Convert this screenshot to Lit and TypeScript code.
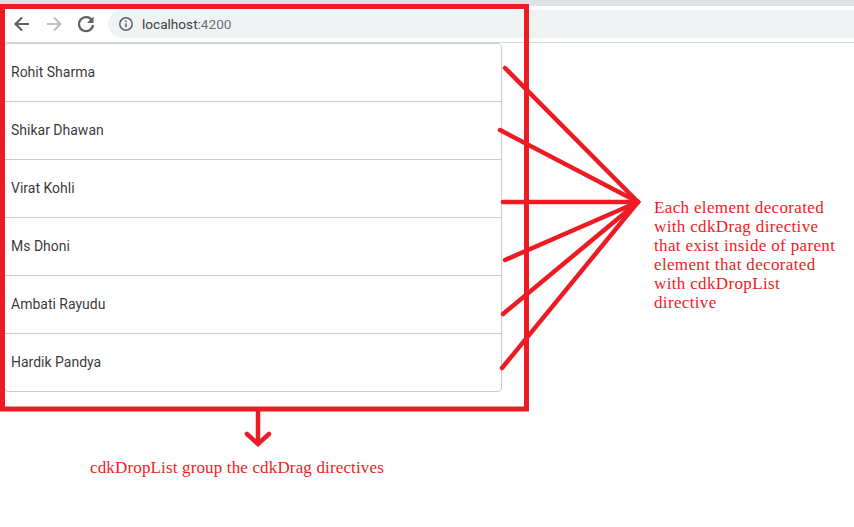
import { LitElement, html, css, svg } from "lit";
import { customElement } from "lit/decorators.js";

const NAMES = ["Rohit Sharma", "Shikar Dhawan", "Virat Kohli", "Ms Dhoni", "Ambati Rayudu", "Hardik Pandya"];
const STARTS = [[505, 68], [500, 130], [503, 202], [505, 260], [503, 314], [502, 368]];

@customElement("app-root")
export class AppRoot extends LitElement {
  static styles = css`
    :host { display: block; position: relative; width: 854px; height: 527px; overflow: hidden; background: #fff; font-family: Roboto, sans-serif; }
    .tabstrip { height: 6px; background: #dee1e6; }
    .toolbar { height: 36px; display: flex; align-items: center; padding-left: 12px; border-bottom: 1px solid #d6d6d6; background: #fff; }
    .nav { display: flex; gap: 12px; margin-right: 12px; }
    .nav svg { display: block; width: 20px; height: 20px; }
    .omni { flex: 1; height: 28px; border-radius: 14px 0 0 14px; background: #f0f3f4; display: flex; align-items: center; padding-left: 10px; gap: 8px; font-size: 13.6px; color: #3c4043; }
    .omni svg { width: 16px; height: 16px; }
    .port { color: #6b7175; }
    .list { width: 498px; margin-left: 4px; box-sizing: border-box; border: 1px solid #ccc; border-radius: 4px; }
    .row { height: 58px; box-sizing: border-box; display: flex; align-items: center; padding: 0 0 2px 6px; font-size: 14px; color: rgba(0,0,0,.8); border-bottom: 1px solid #ccc; }
    .row:last-child { border-bottom: none; height: 57px; }
    .overlay { position: absolute; inset: 0; width: 854px; height: 527px; pointer-events: none; }
    .note { position: absolute; font-family: "Liberation Serif", serif; color: #ed1c24; font-size: 17px; line-height: 19px; white-space: nowrap; }
    .note.side { left: 654px; top: 198px; letter-spacing: 0.35px; }
    .note.bottom { left: 90px; top: 458px; letter-spacing: 0.15px; }
  `;

  render() {
    return html`
      <div class="tabstrip"></div>
      <div class="toolbar">
        <div class="nav">
          <svg viewBox="0 0 20 20"><path d="M17 10H4.500M10 3.500 3.500 10l6.500 6.500" fill="none" stroke="#5f6368" stroke-width="2.200"/></svg>
          <svg viewBox="0 0 20 20"><path d="M3 10h12.500M10 3.500l6.500 6.500-6.500 6.500" fill="none" stroke="#bdc1c6" stroke-width="2.200"/></svg>
          <svg viewBox="0 0 20 20"><path d="M16 6.500A7 7 0 1 0 17 11" fill="none" stroke="#5f6368" stroke-width="2.200"/><path d="M17.500 2.500v6.500h-6.500z" fill="#5f6368"/></svg>
        </div>
        <div class="omni">
          <svg viewBox="0 0 16 16"><circle cx="8" cy="8" r="6.200" fill="none" stroke="#5f6368" stroke-width="1.500"/><path d="M8 7.200v4M8 4.600v1.500" stroke="#5f6368" stroke-width="1.500"/></svg>
          <span>localhost<span class="port">:4200</span></span>
        </div>
      </div>
      <div class="list">
        ${NAMES.map((n) => html`<div class="row">${n}</div>`)}
      </div>
      <svg class="overlay" viewBox="0 0 854 527">
        <rect x="2.500" y="6.500" width="524" height="402.500" fill="none" stroke="#ed1c24" stroke-width="5"/>
        ${STARTS.map(([x, y]) => svg`<line x1=${x} y1=${y} x2="638" y2="202" stroke="#ed1c24" stroke-width="4.500" stroke-linecap="round"/>`)}
        <path d="M258 411V444M247 434l11 10 11-10" fill="none" stroke="#ed1c24" stroke-width="4.500" stroke-linecap="round"/>
      </svg>
      <div class="note side">Each element decorated<br>with cdkDrag directive<br>that exist inside of parent<br>element that decorated<br>with cdkDropList<br>directive</div>
      <div class="note bottom">cdkDropList group the cdkDrag directives</div>
    `;
  }
}
